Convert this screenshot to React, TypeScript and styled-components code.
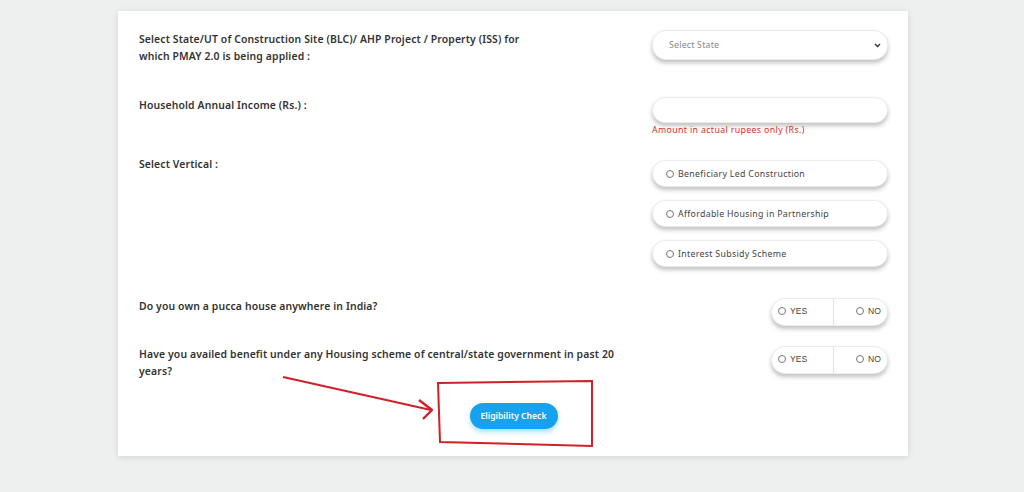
import styled, { createGlobalStyle } from 'styled-components';

const GlobalStyle = createGlobalStyle`
  * { box-sizing: border-box; }
  body {
    margin: 0;
    background: #eef0f0;
    font-family: "Noto Sans", "DejaVu Sans", sans-serif;
  }
`;

const VERTICALS = [
  'Beneficiary Led Construction',
  'Affordable Housing in Partnership',
  'Interest Subsidy Scheme',
];

function RadioDot() {
  return <StyledDot />;
}

function YesNo() {
  return (
    <StyledYesNo>
      <StyledYesNoHalf $side="left">
        <RadioDot />
        YES
      </StyledYesNoHalf>
      <StyledYesNoHalf $side="right">
        <RadioDot />
        NO
      </StyledYesNoHalf>
    </StyledYesNo>
  );
}

function App() {
  return (
    <StyledPage>
      <GlobalStyle />
      <StyledCard>
        <StyledRow $h={67}>
          <StyledLabel $top={1}>
            Select State/UT of Construction Site (BLC)/ AHP Project / Property (ISS) for
            <br />
            which PMAY 2.0 is being applied :
          </StyledLabel>
          <StyledControl>
            <StyledSelect>
              Select State
              <svg width="7" height="5" viewBox="0 0 7 5">
                <path d="M1 1l2.5 2.5L6 1" fill="none" stroke="#333" strokeWidth="1.4" />
              </svg>
            </StyledSelect>
          </StyledControl>
        </StyledRow>

        <StyledRow $h={63}>
          <StyledLabel>Household Annual Income (Rs.) :</StyledLabel>
          <StyledControl>
            <StyledInput />
            <StyledHelp>Amount in actual rupees only (Rs.)</StyledHelp>
          </StyledControl>
        </StyledRow>

        <StyledRow $h={138}>
          <StyledLabel $top={-4}>Select Vertical :</StyledLabel>
          <StyledControl $gap={13}>
            {VERTICALS.map(item => (
              <StyledOption key={item}>
                <RadioDot />
                {item}
              </StyledOption>
            ))}
          </StyledControl>
        </StyledRow>

        <StyledRow $h={48}>
          <StyledLabel>Do you own a pucca house anywhere in India?</StyledLabel>
          <StyledControl $right>
            <YesNo />
          </StyledControl>
        </StyledRow>

        <StyledRow $h={57}>
          <StyledLabel>
            Have you availed benefit under any Housing scheme of central/state government in past 20
            <br />
            years?
          </StyledLabel>
          <StyledControl $right>
            <YesNo />
          </StyledControl>
        </StyledRow>

        <StyledButtonRow>
          <StyledButton type="button">Eligibility Check</StyledButton>
        </StyledButtonRow>
      </StyledCard>

      <StyledMarkup width="1024" height="492" viewBox="0 0 1024 492">
        <path d="M438 383 L592 381 L592 446 L440 442 Z" fill="none" stroke="#d0202a" strokeWidth="2" />
        <path d="M283 377 L431 410" stroke="#d0202a" strokeWidth="2" fill="none" />
        <path d="M419 400 L432 410 L423 419" stroke="#d0202a" strokeWidth="2.4" fill="none" strokeLinejoin="round" />
      </StyledMarkup>
    </StyledPage>
  );
}

const StyledPage = styled.div`
  position: relative;
  width: 1024px;
  height: 492px;
  padding: 11px 116px 0 118px;
  overflow: hidden;
`;

const StyledCard = styled.div`
  width: 790px;
  height: 445px;
  padding: 19px 20px 0 21px;
  background: #fff;
  box-shadow: 0 1px 6px rgba(0, 0, 0, 0.12);
  color: #333;
`;

const StyledRow = styled.div<{ $h: number }>`
  display: flex;
  justify-content: space-between;
  align-items: flex-start;
  height: ${({ $h }) => $h}px;
`;

const StyledLabel = styled.div<{ $top?: number }>`
  margin-top: ${({ $top = 0 }) => $top}px;
  font-size: 10.4px;
  font-weight: 600;
  line-height: 16.5px;
  letter-spacing: 0.13px;
  color: #333;
`;

const StyledControl = styled.div<{ $gap?: number; $right?: boolean }>`
  display: flex;
  flex-direction: column;
  align-items: ${({ $right }) => ($right ? 'flex-end' : 'stretch')};
  gap: ${({ $gap = 0 }) => $gap}px;
  width: 236px;
`;

const pill = `
  background: #fff;
  border: 1px solid #ececec;
  border-radius: 14px;
  box-shadow: 0 3px 4px rgba(0, 0, 0, 0.24);
`;

const StyledSelect = styled.div`
  ${pill}
  display: flex;
  align-items: center;
  justify-content: space-between;
  height: 30px;
  padding: 0 6px 0 16px;
  font-size: 8.8px;
  letter-spacing: 0.2px;
  color: #888;
`;

const StyledInput = styled.div`
  ${pill}
  height: 26px;
`;

const StyledHelp = styled.div`
  margin-top: 1px;
  font-size: 8.8px;
  line-height: 12px;
  letter-spacing: 0.35px;
  color: #d3302b;
`;

const StyledOption = styled.div`
  ${pill}
  display: flex;
  align-items: center;
  gap: 4px;
  height: 27px;
  padding: 0 13px;
  font-size: 8.8px;
  letter-spacing: 0.3px;
  color: #444;
`;

const StyledDot = styled.span`
  display: inline-block;
  width: 8px;
  height: 8px;
  border: 1px solid #777;
  border-radius: 50%;
  flex-shrink: 0;
`;

const StyledYesNo = styled.div`
  ${pill}
  display: grid;
  grid-template-columns: 61px 1fr;
  width: 117px;
  height: 28px;
  font-family: "Liberation Sans", Arial, sans-serif;
  font-size: 8.6px;
  color: #444;
`;

const StyledYesNoHalf = styled.div<{ $side: 'left' | 'right' }>`
  display: flex;
  align-items: center;
  justify-content: ${({ $side }) => ($side === 'left' ? 'flex-start' : 'flex-end')};
  gap: 4px;
  padding: 0 6px 2px;
  border-left: ${({ $side }) => ($side === 'right' ? '1px solid #e2e2e2' : 'none')};
`;

const StyledButtonRow = styled.div`
  display: flex;
  justify-content: center;
`;

const StyledButton = styled.button`
  width: 88px;
  height: 26px;
  border: none;
  border-radius: 13px;
  background: #17a2f0;
  box-shadow: 0 3px 5px rgba(23, 162, 240, 0.35);
  color: #fff;
  font-family: "Noto Sans", sans-serif;
  font-size: 8.6px;
  font-weight: 600;
  cursor: pointer;
`;

const StyledMarkup = styled.svg`
  position: absolute;
  top: 0;
  left: 0;
  pointer-events: none;
`;

export default App;
